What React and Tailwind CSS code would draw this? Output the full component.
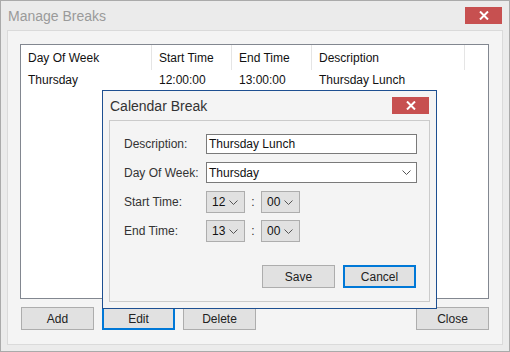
const font = { fontFamily: '"Liberation Sans", Arial, sans-serif' }

const COLS = [
  { label: 'Day Of Week', w: 'w-[131px]', value: 'Thursday' },
  { label: 'Start Time', w: 'w-[80px]', value: '12:00:00' },
  { label: 'End Time', w: 'w-[80px]', value: '13:00:00' },
  { label: 'Description', w: 'w-[153px]', value: 'Thursday Lunch' },
]

function Chevron() {
  return (
    <svg width="9" height="5" viewBox="0 0 9 5" className="shrink-0">
      <path d="M0.5 0.5 L4.5 4.5 L8.5 0.5" fill="none" stroke="#555" strokeWidth="1" />
    </svg>
  )
}

function CloseX() {
  return (
    <svg width="10" height="9" viewBox="0 0 10 9">
      <path d="M1 0.5 L9 8.5 M9 0.5 L1 8.5" stroke="#fff" strokeWidth="2" />
    </svg>
  )
}

function Button({ children, focused, className = '' }) {
  return (
    <div
      className={`w-[73px] h-[23px] flex items-center justify-center text-[12px] text-[#222] bg-[#e1e1e1] ${
        focused ? 'border-2 border-[#0078d7]' : 'border border-[#adadad]'
      } ${className}`}
    >
      {children}
    </div>
  )
}

function Combo({ value }) {
  return (
    <div className="w-[39px] h-[22px] border border-[#adadad] bg-[#e1e1e1] flex items-center justify-between pl-[5px] pr-[6px] text-[12px] text-[#111]">
      <span>{value}</span>
      <Chevron />
    </div>
  )
}

function TimeRow({ label, h, m }) {
  return (
    <div className="flex items-center h-[22px]">
      <span className="w-[82px] text-[12px] text-[#333]">{label}</span>
      <Combo value={h} />
      <span className="w-[16px] text-center text-[12px] text-[#333]">:</span>
      <Combo value={m} />
    </div>
  )
}

function CalendarBreak() {
  return (
    <div className="absolute left-[101px] top-[89px] w-[335px] h-[219px] border border-[#1d4f91] bg-[#f4f4f4] flex flex-col px-[6px] pb-[6px]">
      <div className="h-[29px] flex items-start justify-between">
        <span className="pl-[1px] pt-[5px] text-[14px] text-[#333]">Calendar Break</span>
        <div className="mt-[6px] mr-[1px] w-[37px] h-[17px] bg-[#c75050] flex items-center justify-center">
          <CloseX />
        </div>
      </div>
      <div className="flex-1 border border-[#cbcbcb] flex flex-col pl-[14px] pt-[13px]">
        <div className="flex items-center h-[20px]">
          <span className="w-[82px] text-[12px] text-[#333]">Description:</span>
          <div className="w-[211px] h-[20px] border border-[#7a7a7a] bg-white flex items-center pl-[2px] text-[12px] text-[#111]">
            Thursday Lunch
          </div>
        </div>
        <div className="flex items-center h-[21px] mt-[8px]">
          <span className="w-[82px] text-[12px] text-[#333]">Day Of Week:</span>
          <div className="w-[211px] h-[21px] border border-[#7a7a7a] bg-white flex items-center justify-between pl-[2px] pr-[5px] text-[12px] text-[#111]">
            <span>Thursday</span>
            <Chevron />
          </div>
        </div>
        <div className="mt-[8px]">
          <TimeRow label="Start Time:" h="12" m="00" />
        </div>
        <div className="mt-[7px]">
          <TimeRow label="End Time:" h="13" m="00" />
        </div>
        <div className="flex justify-end gap-[8px] pr-[13px] mt-[23px]">
          <Button>Save</Button>
          <Button focused>Cancel</Button>
        </div>
      </div>
    </div>
  )
}

export default function App() {
  return (
    <div style={font} className="relative w-[510px] h-[352px] border border-[#aaaaaa] bg-[#ebebeb] flex flex-col">
      <div className="h-[29px] flex items-start justify-between">
        <span className="pl-[7px] pt-[5px] text-[14px] text-[#9a9a9a]">Manage Breaks</span>
        <div className="mt-[6px] mr-[7px] w-[37px] h-[17px] bg-[#c75050] flex items-center justify-center">
          <CloseX />
        </div>
      </div>
      <div className="flex-1 mx-[6px] mb-[6px] border border-[#dadada] bg-[#f4f4f4] flex flex-col pl-[12px] pt-[13px] pr-[13px]">
        <div className="w-[469px] h-[255px] border border-[#828790] bg-white flex flex-col">
          <div className="flex h-[25px]">
            {COLS.map(c => (
              <div key={c.label} className={`${c.w} h-full border-r border-[#e5e5e5] flex items-center pl-[7px] text-[12px] text-[#111]`}>
                {c.label}
              </div>
            ))}
          </div>
          <div className="flex h-[20px]">
            {COLS.map(c => (
              <div key={c.label} className={`${c.w} flex items-center pl-[7px] text-[12px] text-[#111]`}>
                {c.value}
              </div>
            ))}
          </div>
        </div>
        <div className="flex mt-[8px] pl-[1px]">
          <Button>Add</Button>
          <Button focused className="ml-[8px]">Edit</Button>
          <Button className="ml-[8px]">Delete</Button>
          <Button className="ml-auto">Close</Button>
        </div>
      </div>
      <CalendarBreak />
    </div>
  )
}
